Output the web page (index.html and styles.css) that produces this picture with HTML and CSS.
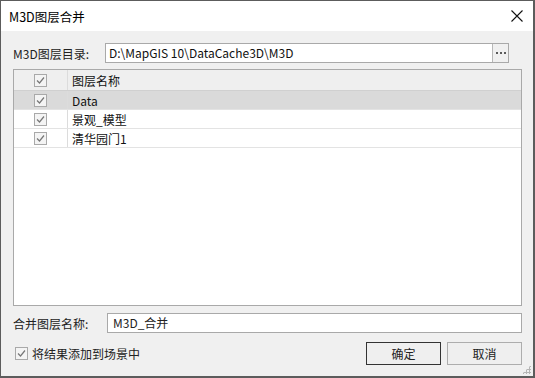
FILE: index.html
```html
<!DOCTYPE html>
<html lang="zh-CN">
<head>
  <meta charset="UTF-8">
  <title>M3D图层合并</title>
  <link rel="stylesheet" href="styles.css">
</head>
<body>
  <div class="dialog">
    <div class="title-bar">
      <span class="title">M3D图层合并</span>
      <svg class="close" width="12" height="12" viewBox="0 0 12 12">
        <path d="M0.5 0.5 L11.5 11.5 M11.5 0.5 L0.5 11.5" stroke="#111" stroke-width="1.1" fill="none"/>
      </svg>
    </div>

    <div class="content">
      <div class="field-row">
        <label class="field-label">M3D图层目录:</label>
        <div class="path-box">
          <span class="path-text">D:\MapGIS 10\DataCache3D\M3D</span>
          <span class="browse">
            <svg width="12" height="2" viewBox="0 0 12 2">
              <rect x="1" y="0" width="2" height="2" fill="#5a5a5a"/>
              <rect x="5" y="0" width="2" height="2" fill="#5a5a5a"/>
              <rect x="9" y="0" width="2" height="2" fill="#5a5a5a"/>
            </svg>
          </span>
        </div>
      </div>

      <div class="layer-table">
        <div class="row header">
          <div class="cell check-cell"><span class="check"></span></div>
          <div class="cell name-cell">图层名称</div>
        </div>
        <div class="row selected">
          <div class="cell check-cell"><span class="check"></span></div>
          <div class="cell name-cell">Data</div>
        </div>
        <div class="row">
          <div class="cell check-cell"><span class="check"></span></div>
          <div class="cell name-cell">景观_模型</div>
        </div>
        <div class="row">
          <div class="cell check-cell"><span class="check"></span></div>
          <div class="cell name-cell">清华园门1</div>
        </div>
      </div>

      <div class="field-row merge-row">
        <label class="field-label">合并图层名称:</label>
        <div class="name-box">M3D_合并</div>
      </div>

      <div class="bottom-row">
        <label class="add-scene"><span class="check"></span>将结果添加到场景中</label>
        <div class="buttons">
          <button class="btn btn-default">确定</button>
          <button class="btn">取消</button>
        </div>
      </div>
    </div>
    <span class="grip"></span>
  </div>
</body>
</html>
```

FILE: styles.css
```css
* {
  box-sizing: border-box;
  margin: 0;
  padding: 0;
}

body {
  font-family: "Noto Sans CJK SC", "Noto Sans", sans-serif;
  font-size: 12px;
  color: #1a1a1a;
  background: #3c3c3c;
}

.dialog {
  position: relative;
  width: 535px;
  height: 378px;
  border: 1px solid #5c5c5c;
  border-right-width: 2px;
  border-bottom-width: 2px;
  background: #f0f0f0;
  display: flex;
  flex-direction: column;
}

.title-bar {
  height: 30px;
  background: #fff;
  display: flex;
  align-items: center;
  justify-content: space-between;
  padding: 0 10px 0 8px;
}

.title {
  font-size: 12.5px;
  color: #000;
}

.content {
  flex: 1;
  padding: 12px 11px 0 12px;
  display: flex;
  flex-direction: column;
}

.field-row {
  display: flex;
  align-items: center;
  height: 20px;
}

.field-label {
  width: 92px;
  color: #222;
}

.path-box {
  flex: 1;
  display: flex;
  height: 20px;
  margin-right: 13px;
  background: #fff;
  border: 1px solid #a9a9a9;
}

.path-text {
  flex: 1;
  padding-left: 3px;
  line-height: 18px;
  color: #111;
}

/* ellipsis button at the right end of the path box */
.browse {
  width: 16px;
  display: flex;
  align-items: center;
  justify-content: center;
  border-left: 1px solid #b8b8b8;
  background: #f0f0f0;
}

.layer-table {
  margin-top: 6px;
  height: 237px;
  background: #fff;
  border: 1px solid #a9a9a9;
}

.row {
  display: flex;
  height: 19px;
  border-bottom: 1px solid #e3e3e3;
}

.row.header {
  height: 21px;
  background: #efefef;
  border-bottom-color: #d0d0d0;
}

.row.selected {
  background: #dadada;
}

.cell {
  display: flex;
  align-items: center;
}

.check-cell {
  width: 54px;
  justify-content: center;
  border-right: 1px solid #dcdcdc;
}

.name-cell {
  padding-left: 4px;
  color: #111;
}

.check {
  display: inline-block;
  width: 13px;
  height: 13px;
  border: 1px solid #a9a9a9;
  background: #f4f4f4 url("data:image/svg+xml,%3Csvg xmlns='http://www.w3.org/2000/svg' width='11' height='11'%3E%3Cpath d='M2 5.5 L4.5 8 L9 2.5' stroke='%23777' stroke-width='1.2' fill='none'/%3E%3C/svg%3E") no-repeat center;
}

.merge-row {
  margin-top: 7px;
}

.name-box {
  flex: 1;
  height: 20px;
  margin-left: 2px;
  background: #fff;
  border: 1px solid #a9a9a9;
  padding-left: 5px;
  line-height: 18px;
  color: #222;
}

.bottom-row {
  margin-top: 9px;
  display: flex;
  justify-content: space-between;
  align-items: center;
}

.add-scene {
  display: flex;
  align-items: center;
  gap: 4px;
  padding-left: 2px;
  color: #222;
}

.buttons {
  display: flex;
  gap: 6px;
}

.btn {
  width: 75px;
  height: 23px;
  font-family: inherit;
  font-size: 12px;
  color: #222;
  background: #efefef;
  border: 1px solid #adadad;
}

.btn-default {
  border-color: #333;
}

.grip {
  position: absolute;
  right: 2px;
  bottom: 2px;
  width: 9px;
  height: 9px;
  background:
    radial-gradient(circle, #b5b5b5 1px, transparent 1.2px) 0 0 / 3px 3px;
  clip-path: polygon(100% 0, 100% 100%, 0 100%);
}
```
